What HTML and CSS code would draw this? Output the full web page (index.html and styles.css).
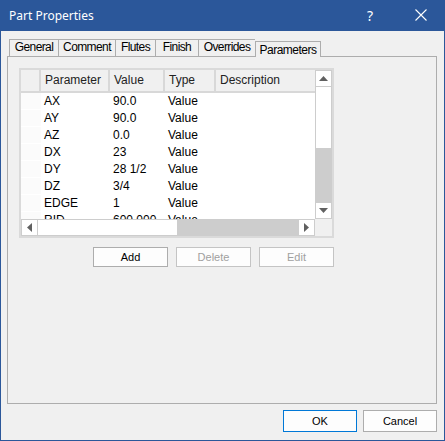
FILE: index.html
```html
<!DOCTYPE html>
<html>
<head>
<meta charset="utf-8">
<title>Part Properties</title>
<link rel="stylesheet" href="styles.css">
</head>
<body>
<div class="window">
  <div class="titlebar">
    <span class="title">Part Properties</span>
    <span class="help">?</span>
    <span class="close">
      <svg width="12" height="12" viewBox="0 0 12 12"><path d="M0.5 0.5 L11.5 11.5 M11.5 0.5 L0.5 11.5" stroke="#fff" stroke-width="1.1" fill="none"/></svg>
    </span>
  </div>
  <div class="content">
    <div class="tabs">
      <div class="tab t-general">General</div>
      <div class="tab t-comment">Comment</div>
      <div class="tab t-flutes">Flutes</div>
      <div class="tab t-finish">Finish</div>
      <div class="tab t-overrides">Overrides</div>
      <div class="tab active t-params">Parameters</div>
    </div>
    <div class="panel">
      <div class="grid">
        <div class="grid-main">
          <div class="grid-view">
            <div class="header">
              <div class="hcell c-row"></div>
              <div class="hcell c-param">Parameter</div>
              <div class="hcell c-value">Value</div>
              <div class="hcell c-type">Type</div>
              <div class="hcell c-desc">Description</div>
            </div>
            <div class="rows">
              <div class="row"><div class="cell c-row"></div><div class="cell c-param">AX</div><div class="cell c-value">90.0</div><div class="cell c-type">Value</div><div class="cell c-desc"></div></div>
              <div class="row"><div class="cell c-row"></div><div class="cell c-param">AY</div><div class="cell c-value">90.0</div><div class="cell c-type">Value</div><div class="cell c-desc"></div></div>
              <div class="row"><div class="cell c-row"></div><div class="cell c-param">AZ</div><div class="cell c-value">0.0</div><div class="cell c-type">Value</div><div class="cell c-desc"></div></div>
              <div class="row"><div class="cell c-row"></div><div class="cell c-param">DX</div><div class="cell c-value">23</div><div class="cell c-type">Value</div><div class="cell c-desc"></div></div>
              <div class="row"><div class="cell c-row"></div><div class="cell c-param">DY</div><div class="cell c-value">28 1/2</div><div class="cell c-type">Value</div><div class="cell c-desc"></div></div>
              <div class="row"><div class="cell c-row"></div><div class="cell c-param">DZ</div><div class="cell c-value">3/4</div><div class="cell c-type">Value</div><div class="cell c-desc"></div></div>
              <div class="row"><div class="cell c-row"></div><div class="cell c-param">EDGE</div><div class="cell c-value">1</div><div class="cell c-type">Value</div><div class="cell c-desc"></div></div>
              <div class="row"><div class="cell c-row"></div><div class="cell c-param">RID</div><div class="cell c-value">600.000</div><div class="cell c-type">Value</div><div class="cell c-desc"></div></div>
            </div>
          </div>
          <div class="vscroll">
            <div class="sbtn"><svg width="9" height="5" viewBox="0 0 9 5"><polygon points="4.5,0 9,5 0,5" fill="#606060"/></svg></div>
            <div class="vthumb"></div>
            <div class="vtrack"></div>
            <div class="sbtn"><svg width="9" height="5" viewBox="0 0 9 5"><polygon points="0,0 9,0 4.5,5" fill="#606060"/></svg></div>
          </div>
        </div>
        <div class="grid-bottom">
          <div class="hscroll">
            <div class="sbtn"><svg width="5" height="9" viewBox="0 0 5 9"><polygon points="5,0 5,9 0,4.5" fill="#606060"/></svg></div>
            <div class="hthumb"></div>
            <div class="htrack"></div>
            <div class="sbtn"><svg width="5" height="9" viewBox="0 0 5 9"><polygon points="0,0 5,4.5 0,9" fill="#606060"/></svg></div>
          </div>
          <div class="corner"></div>
        </div>
      </div>
      <div class="grid-actions">
        <button class="btn small">Add</button>
        <button class="btn small disabled">Delete</button>
        <button class="btn small disabled">Edit</button>
      </div>
    </div>
    <div class="footer">
      <button class="btn big default">OK</button>
      <button class="btn big">Cancel</button>
    </div>
  </div>
</div>
</body>
</html>
```

FILE: styles.css
```css
* { box-sizing: border-box; }
html, body { margin: 0; padding: 0; background: #f0f0f0; }
body { width: 445px; height: 441px; overflow: hidden; }

.window {
  width: 445px;
  height: 441px;
  background: #f0f0f0;
  border: 1px solid #2b579a;
  border-top: none;
  display: flex;
  flex-direction: column;
  font-family: "Liberation Sans", Arial, sans-serif;
}

.titlebar {
  height: 31px;
  margin: 0 -1px;
  background: #2b579a;
  color: #fff;
  display: flex;
  align-items: center;
  padding-left: 9px;
  font-family: "Noto Sans", "Open Sans", sans-serif;
  font-size: 12px;
}
.title { flex: 1; margin-top: -1px; }
.help { width: 12px; margin-right: 36px; font-size: 14px; margin-top: -1px; }
.close { width: 12px; height: 12px; margin-right: 18px; display: flex; margin-top: -1px; }

.content {
  flex: 1;
  padding: 8px 7px 0 6px;
  display: flex;
  flex-direction: column;
}

.tabs {
  height: 17px;
  display: flex;
  align-items: flex-end;
  padding-left: 2px;
}
.tab {
  height: 17px;
  border: 1px solid #adadad;
  border-right: none;
  border-bottom: none;
  background: #f0f0f0;
  font-size: 12px;
  letter-spacing: -0.6px;
  color: #000;
  text-align: center;
  line-height: 15px;
  white-space: nowrap;
}
.tab.active {
  height: 16px;
  margin-bottom: -1px;
  border-right: 1px solid #adadad;
  position: relative;
  z-index: 1;
  line-height: 16px;
  letter-spacing: -0.5px;
}
.t-general { width: 49px; }
.t-comment { width: 57px; }
.t-flutes { width: 40px; }
.t-finish { width: 43px; }
.t-overrides { width: 57px; }
.t-params { width: 66px; }

.panel {
  height: 348px;
  border: 1px solid #adadad;
  padding: 11px 0 0 11px;
}

.grid {
  width: 315px;
  border: 2px solid #dadada;
  background: #fff;
}
.grid-main { display: flex; height: 149px; }
.grid-view { width: 294px; overflow: hidden; }

.header {
  display: flex;
  height: 23px;
  background: #f0f0f0;
  border-bottom: 2px solid #d8d8d8;
}
.hcell {
  height: 21px;
  border-right: 2px solid #d8d8d8;
  font-size: 12px;
  line-height: 20px;
  color: #222;
  padding-left: 4px;
  white-space: nowrap;
}
.c-row { width: 20px; flex: none; }
.c-param { width: 69px; flex: none; }
.c-value { width: 55px; flex: none; }
.c-type { width: 51px; flex: none; }
.c-desc { width: 99px; flex: none; border-right: none; }

.rows { height: 126px; overflow: hidden; }
.row { display: flex; height: 17px; }
.cell {
  font-size: 12px;
  line-height: 17px;
  color: #000;
  padding-left: 3px;
  white-space: nowrap;
}
.row .c-row { background: #fbfbfb; border-bottom: 1px solid #fff; }

.vscroll {
  width: 17px;
  display: flex;
  flex-direction: column;
}
.sbtn {
  width: 17px;
  height: 17px;
  flex: none;
  background: #fff;
  border: 1px solid #cdcdcd;
  display: flex;
  align-items: center;
  justify-content: center;
}
.vthumb { height: 61px; background: #fff; border-left: 1px solid #cdcdcd; border-right: 1px solid #cdcdcd; }
.vtrack { flex: 1; background: #cdcdcd; }

.grid-bottom { display: flex; height: 17px; }
.hscroll { width: 294px; display: flex; }
.hthumb { width: 139px; background: #fff; border-top: 1px solid #cdcdcd; border-bottom: 1px solid #cdcdcd; }
.htrack { flex: 1; background: #cdcdcd; }
.corner { width: 17px; background: #f0f0f0; }

.grid-actions {
  width: 315px;
  display: flex;
  justify-content: flex-end;
  gap: 8px;
  margin-top: 9px;
}

.btn {
  font-family: "Liberation Sans", Arial, sans-serif;
  font-size: 11px;
  color: #000;
  background: #fdfdfd;
  border: 1px solid #adadad;
  padding: 0;
  margin: 0;
}
.btn.small { width: 75px; height: 20px; }
.btn.disabled { color: #a0a0a0; border-color: #c4c4c4; }
.btn.big { width: 74px; height: 22px; }
.btn.default { border-color: #0078d7; }

.footer {
  display: flex;
  justify-content: flex-end;
  gap: 6px;
  margin-top: 6px;
}
```
